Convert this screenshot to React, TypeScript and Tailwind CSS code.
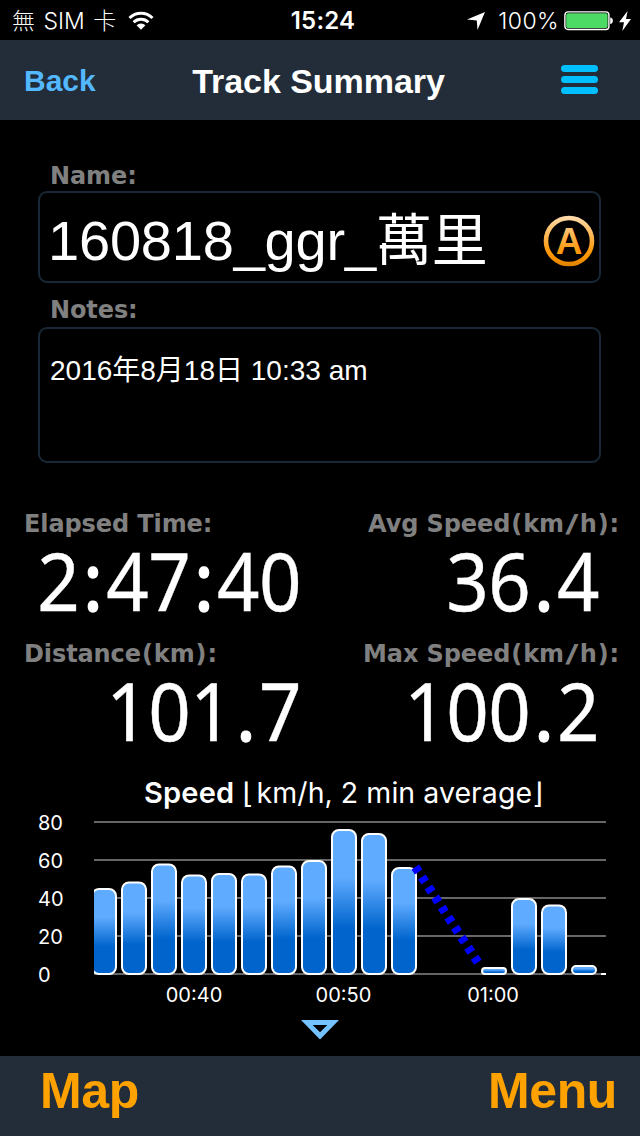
import type { ReactNode } from "react";

const BARS = [
  { slot: 0, top: 888 },
  { slot: 1, top: 881.5 },
  { slot: 2, top: 863.5 },
  { slot: 3, top: 874.5 },
  { slot: 4, top: 873 },
  { slot: 5, top: 873.5 },
  { slot: 6, top: 865.5 },
  { slot: 7, top: 860 },
  { slot: 8, top: 829 },
  { slot: 9, top: 833 },
  { slot: 10, top: 867 },
  { slot: 13, top: 967 },
  { slot: 14, top: 898 },
  { slot: 15, top: 904.5 },
  { slot: 16, top: 965 },
];

const Y_TICKS = [
  { value: 80, y: 822 },
  { value: 60, y: 860 },
  { value: 40, y: 898 },
  { value: 20, y: 936 },
  { value: 0, y: 974 },
];

const X_TICKS = [
  { label: "00:40", x: 194 },
  { label: "00:50", x: 343.5 },
  { label: "01:00", x: 493 },
];

const STATS = [
  { label: "Elapsed Time:", value: "2:47:40" },
  { label: "Avg Speed(km/h):", value: "36.4" },
  { label: "Distance(km):", value: "101.7" },
  { label: "Max Speed(km/h):", value: "100.2" },
];

function StatusBar() {
  return (
    <div className="grid h-10 grid-cols-3 items-center font-['Inter','Noto_Sans_CJK_TC',sans-serif] text-[23px] leading-[42px]">
      <div className="flex items-center pl-3">
        <span className="font-light whitespace-pre">
          無<span className="px-[2px]"> SIM </span>卡
        </span>
        <svg width="26" height="20" viewBox="0 0 26 20" className="ml-3">
          <g fill="none" stroke="white" strokeWidth="3">
            <path d="M1.5 7a16.3 16.3 0 0 1 23 0" />
            <path d="M5.6 11.2a10.5 10.5 0 0 1 14.8 0" />
          </g>
          <path d="M13 18.7 8.6 14.3a6.3 6.3 0 0 1 8.8 0Z" fill="white" />
        </svg>
      </div>
      <span className="pl-1.5 text-center text-[24px] font-semibold tracking-[0.2px]">15:24</span>
      <div className="flex items-center justify-end pr-[9px]">
        <svg width="18" height="18" viewBox="0 0 18 18" className="mr-[13px]">
          <path d="M18 0 10.5 18 9.8 8.4 0 7.6Z" fill="white" />
        </svg>
        <span className="font-light tracking-[0.4px]">100%</span>
        <svg width="50" height="20" viewBox="0 0 50 20" className="ml-[5px]">
          <rect x="0.9" y="0.9" width="44" height="17.6" rx="3" fill="none" stroke="white" strokeWidth="1.4" />
          <rect x="2.2" y="2.3" width="41.4" height="14.8" rx="1.8" fill="#4cd964" />
          <path d="M46.2 6.5v6.6c1.6-.3 2.7-1.4 2.7-3.3S47.8 6.8 46.2 6.5Z" fill="white" />
        </svg>
        <svg width="12" height="20" viewBox="0 0 12 20" className="ml-[5px]">
          <path d="M8.6 0 0 11.2h5L3.3 20 12 8H7Z" fill="white" />
        </svg>
      </div>
    </div>
  );
}

function Header() {
  return (
    <header className="grid h-20 grid-cols-[1fr_auto_1fr] items-center bg-[#222d39] font-['Liberation_Sans',sans-serif] font-bold">
      <button className="pl-6 text-left text-[30px] leading-[82px] text-[#54b8ff]">Back</button>
      <h1 className="-ml-[3px] text-[34px] leading-[78px] tracking-[-0.05px]">Track Summary</h1>
      <div className="flex justify-end pr-[42px]">
        <div className="flex w-[37px] flex-col gap-1 pb-[4px]">
          <span className="h-[7px] rounded-full bg-[#00bfff]" />
          <span className="h-[7px] rounded-full bg-[#00bfff]" />
          <span className="h-[7px] rounded-full bg-[#00bfff]" />
        </div>
      </div>
    </header>
  );
}

function Label({ children }: { children: ReactNode }) {
  return (
    <div className="font-['DejaVu_Sans',sans-serif] text-[24px] leading-6 font-bold tracking-[-0.1px] whitespace-nowrap text-[#808080]">
      {children}
    </div>
  );
}

// Brackets get extra air and the slash is widened in the stat labels
function StatLabel({ text }: { text: string }) {
  return (
    <Label>
      {text.split(/([()/])/).map((part, i) => (
        <span
          key={i}
          className={part === "/" ? "inline-block scale-x-[1.5] px-[3.5px]" : part === "(" || part === ")" ? "px-px" : ""}
        >
          {part}
        </span>
      ))}
    </Label>
  );
}

function AutoBadge() {
  return (
    <svg width="52" height="52" viewBox="0 0 52 52">
      <defs>
        <linearGradient id="badge" gradientUnits="userSpaceOnUse" x1="0" y1="0" x2="0" y2="52">
          <stop offset="0.05" stopColor="#ffd9a6" />
          <stop offset="0.65" stopColor="#ff9c14" />
          <stop offset="0.8" stopColor="#ff9500" />
          <stop offset="1" stopColor="#d98000" />
        </linearGradient>
      </defs>
      <circle cx="26" cy="26" r="23" fill="none" stroke="url(#badge)" strokeWidth="4.6" />
      <text
        x="26"
        y="38.5"
        textAnchor="middle"
        fill="url(#badge)"
        className="font-['Liberation_Sans',sans-serif] text-[37px] font-bold"
      >
        A
      </text>
    </svg>
  );
}

function Readout({ value }: { value: string }) {
  return (
    <div className="mt-1 flex origin-right scale-x-[0.93] justify-end font-['Noto_Sans',sans-serif] text-[80px] leading-[80px] tracking-[-0.6px] [-webkit-text-stroke:0.4px_white]">
      {value.split(/([:.])/).map((part, i) => (
        <span key={i} className={part === ":" || part === "." ? "px-1 [-webkit-text-stroke:1.5px_white]" : ""}>
          {part}
        </span>
      ))}
    </div>
  );
}

function SpeedChart() {
  return (
    <svg width="640" height="198" viewBox="0 812 640 198" className="block font-['Inter',sans-serif] text-[20px]">
      <defs>
        <linearGradient id="bar" x1="0" y1="0" x2="0" y2="1">
          <stop offset="0.33" stopColor="#5fabff" />
          <stop offset="0.68" stopColor="#0064cc" />
        </linearGradient>
        <clipPath id="plot">
          <rect x="94" y="812" width="512" height="170" />
        </clipPath>
      </defs>
      {Y_TICKS.map((tick) => (
        <g key={tick.value}>
          <path d={`M94 ${tick.y}H606`} stroke="#666666" strokeWidth="2" />
          <text x="38" y={tick.y + 8.3} fill="white">
            {tick.value}
          </text>
        </g>
      ))}
      <g clipPath="url(#plot)">
        {BARS.map((bar) => {
          const height = 974 - bar.top - 1;
          return (
            <rect
              key={bar.slot}
              x={92 + bar.slot * 30}
              y={bar.top + 1}
              width="24"
              height={height}
              rx={Math.min(7, height / 2)}
              fill="url(#bar)"
              stroke="white"
              strokeWidth="2"
            />
          );
        })}
        <path d="M601 974H606" stroke="white" strokeWidth="2" />
        <path d="M415.3 867 480 965.5" stroke="#0000ff" strokeWidth="9" strokeDasharray="6 6" />
      </g>
      {X_TICKS.map((tick) => (
        <text key={tick.label} x={tick.x} y="1002" textAnchor="middle" fill="white">
          {tick.label}
        </text>
      ))}
    </svg>
  );
}

export default function App() {
  return (
    <div className="flex h-[1136px] w-[640px] flex-col overflow-hidden bg-black text-white">
      <StatusBar />
      <Header />

      <main className="flex-1 pt-11">
        <section className="pr-[39px] pl-[38px]">
          <div className="pl-3">
            <Label>Name:</Label>
          </div>
          <div className="mt-[3px] flex h-[92px] items-center justify-between rounded-[9px] border-2 border-[#182836] pr-1 pl-2">
            <span className="pt-2 font-['Liberation_Sans','Noto_Sans_CJK_TC',sans-serif] text-[56px] leading-[80px] tracking-[-0.2px] whitespace-nowrap">
              160818_ggr_萬里
            </span>
            <div className="pt-2">
              <AutoBadge />
            </div>
          </div>

          <div className="mt-[15px] pl-3">
            <Label>Notes:</Label>
          </div>
          <div className="mt-[5px] h-[136px] rounded-[9px] border-2 border-[#182836] pt-[22px] pl-2.5">
            <p className="h-10 font-['Liberation_Sans','Noto_Sans_CJK_TC',sans-serif] text-[28px] leading-10">
              2016年8月18日 10:33 am
            </p>
          </div>
        </section>

        <section className="mt-[49px] grid grid-cols-2 gap-y-[22px]">
          {STATS.map((stat, i) => (
            <div key={stat.label} className={i % 2 === 0 ? "pl-6" : "pr-[21px]"}>
              <div className={i % 2 === 0 ? "" : "flex justify-end"}>
                <StatLabel text={stat.label} />
              </div>
              <div className={i % 2 === 0 ? "pr-[19px]" : "pr-5"}>
                <Readout value={stat.value} />
              </div>
            </div>
          ))}
        </section>

        <h2 className="mt-6 h-[38px] pl-[144px] font-['Inter','DejaVu_Sans',sans-serif] text-[28.5px] leading-[38px] tracking-[0.05px] whitespace-nowrap">
          <span className="text-[29px] font-semibold tracking-[0.2px]">Speed</span>{" "}
          <span className="pr-[3px]">⌊</span>km/h, 2 min average⌋
        </h2>
        <SpeedChart />
        <svg width="38" height="20" viewBox="0 0 38 20" className="mx-auto mt-2.5">
          <path d="M0 0H38L19 19.5ZM11.7 5 19 12.2 26.3 5Z" fill="#74c2ff" fillRule="evenodd" />
        </svg>
      </main>

      <footer className="flex h-20 justify-between bg-[#222d39] pr-[23px] pl-10 font-['Liberation_Sans',sans-serif] text-[50px] leading-[70px] font-bold tracking-[-0.4px] text-[#ffa200]">
        <button className="h-[70px]">Map</button>
        <button className="h-[70px]">Menu</button>
      </footer>
    </div>
  );
}
